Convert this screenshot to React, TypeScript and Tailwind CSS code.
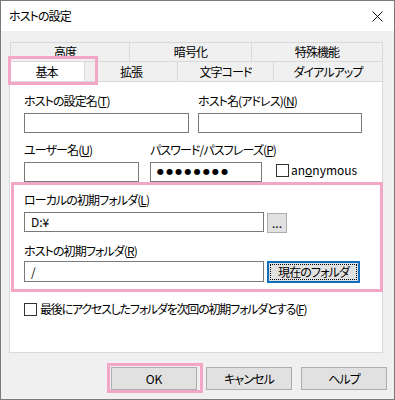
import React from "react";

const Input = ({ w, h = 20, children }: { w: number; h?: number; children?: React.ReactNode }) => (
  <div
    className="border border-[#7a7a7a] bg-white flex items-center pl-[6px] shrink-0"
    style={{ width: w, height: h }}
  >
    {children}
  </div>
);

const Box = () => <div className="w-[13px] h-[13px] border border-[#333333] bg-white shrink-0" />;

const Btn = ({ children }: { children: React.ReactNode }) => (
  <div className="w-[86px] h-[23px] border border-[#adadad] bg-[#e1e1e1] flex items-center justify-center">
    {children}
  </div>
);

export default function App() {
  return (
    <div className="relative w-[395px] h-[400px] border border-[#7a7a7a] bg-[#f0f0f0] text-black text-[12px] leading-[16px] tracking-[-0.9px] whitespace-nowrap font-['Noto_Sans_CJK_JP',sans-serif] [font-feature-settings:'palt'] flex flex-col overflow-hidden">
      {/* title bar */}
      <div className="h-[30px] bg-white flex items-center justify-between pl-[8px] pr-[10px] shrink-0">
        <span>ホストの設定</span>
        <svg width="11" height="11" viewBox="0 0 11 11" className="mr-[1px]">
          <path d="M0.5 0.5L10.5 10.5M10.5 0.5L0.5 10.5" stroke="#111" strokeWidth="1" />
        </svg>
      </div>

      {/* tabs */}
      <div className="mt-[11px] ml-[9px] w-[373px] flex flex-col">
        <div className="flex h-[19px]">
          <div className="w-[119px] border-t border-l border-[#d9d9d9] flex items-center justify-center pr-[10px]">高度</div>
          <div className="w-[122px] border-t border-l border-[#d9d9d9] flex items-center justify-center">暗号化</div>
          <div className="w-[132px] border-t border-l border-r border-[#d9d9d9] flex items-center justify-center">特殊機能</div>
        </div>
        <div className="flex h-[20px]">
          <div className="w-[74px] bg-white border-t border-l border-[#d9d9d9] flex items-center justify-center pr-[2px]">基本</div>
          <div className="w-[93px] border-t border-l border-[#d9d9d9] flex items-center justify-center">拡張</div>
          <div className="w-[96px] border-t border-l border-[#d9d9d9] flex items-center justify-center">文字コード</div>
          <div className="w-[110px] border-t border-l border-r border-[#d9d9d9] flex items-center justify-center">ダイアルアップ</div>
        </div>
      </div>

      {/* panel */}
      <div className="ml-[8px] w-[374px] h-[272px] bg-white border border-[#d9d9d9] flex flex-col shrink-0">
        <div className="flex pl-[14px] pt-[11px] gap-[9px]">
          <div className="flex flex-col gap-[4px]">
            <span>ホストの設定名(<u>T</u>)</span>
            <Input w={165} />
          </div>
          <div className="flex flex-col gap-[4px]">
            <span>ホスト名(アドレス)(<u>N</u>)</span>
            <Input w={164} />
          </div>
        </div>
        <div className="flex pl-[14px] pt-[9px]">
          <div className="flex flex-col gap-[4px] w-[126px]">
            <span>ユーザー名(<u>U</u>)</span>
            <Input w={115} />
          </div>
          <div className="flex flex-col gap-[4px] w-[126px]">
            <span>パスワード/パスフレーズ(<u>P</u>)</span>
            <Input w={112}>
              <span className="font-['DejaVu_Sans',sans-serif] text-[8px] tracking-[2.2px] leading-none">●●●●●●●●</span>
            </Input>
          </div>
          <div className="flex items-center gap-[2px] self-end mb-[4px]">
            <Box />
            <span className="tracking-normal">
              an<u>o</u>nymous
            </span>
          </div>
        </div>

        {/* pink group */}
        <div className="ml-[1px] w-[372px] h-[110px] border-[3px] border-[#f3a6c6] flex flex-col pl-[10px] pt-[7px]">
          <span>ローカルの初期フォルダ(<u>L</u>)</span>
          <div className="flex items-start gap-[3px] mt-[4px]">
            <Input w={240}>
              <span className="tracking-normal">D:¥</span>
            </Input>
            <div className="mt-[1px] w-[20px] h-[20px] border border-[#adadad] bg-[#e1e1e1] flex items-end justify-center pb-[3px] leading-none tracking-normal">
              ...
            </div>
          </div>
          <span className="mt-[10px]">ホストの初期フォルダ(<u>R</u>)</span>
          <div className="flex items-start gap-[3px] mt-[2px]">
            <Input w={240} h={21}>/</Input>
            <div className="w-[93px] h-[22px] border-2 border-[#0f6cbd] bg-[#e1e1e1] p-[1px]">
              <div className="w-full h-full border border-dotted border-black flex items-center justify-center">
                現在のフォルダ
              </div>
            </div>
          </div>
        </div>

        <div className="flex items-center gap-[3px] pl-[14px] mt-[9px]">
          <Box />
          <span className="tracking-[-1.2px]">最後にアクセスしたフォルダを次回の初期フォルダとする(<u>F</u>)</span>
        </div>
      </div>

      {/* buttons */}
      <div className="flex justify-end gap-[9px] mt-[14px] mr-[7px]">
        <div className="relative">
          <Btn>
            <span className="tracking-normal">OK</span>
          </Btn>
          <div className="absolute -left-[4px] -top-[4px] w-[96px] h-[30px] border-[3px] border-[#f3a6c6]" />
        </div>
        <Btn>キャンセル</Btn>
        <Btn>ヘルプ</Btn>
      </div>

      {/* pink highlight over selected tab */}
      <div className="absolute left-[7px] top-[55px] w-[90px] h-[29px] border-[3px] border-[#f3a6c6]" />
    </div>
  );
}
